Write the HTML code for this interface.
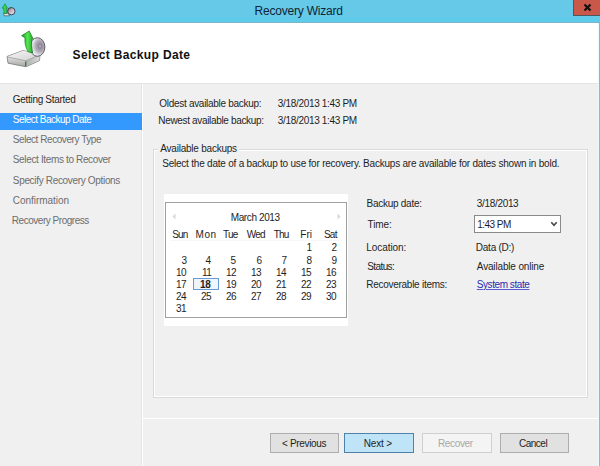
<!DOCTYPE html>
<html><head><meta charset="utf-8"><style>
html,body{margin:0;padding:0;}
body{width:600px;height:466px;overflow:hidden;position:relative;background:#f0f0f0;font-family:"Liberation Sans",sans-serif;}
.r{position:absolute;}
.t{position:absolute;white-space:nowrap;line-height:1;}
</style></head><body>
<div class="r" style="left:0px;top:0px;width:600px;height:23px;background:#67c9e8;"></div>
<div class="r" style="left:0px;top:17px;width:600px;height:5px;background:#5ecbea;"></div>
<div class="r" style="left:0px;top:22px;width:600px;height:1px;background:#7ab6c8;"></div>
<div class="t" style="left:254.60px;top:5.14px;font-size:12px;letter-spacing:-0.214px;color:#0d2535;font-weight:normal;">Recovery Wizard</div>
<div class="r" style="left:573px;top:0px;width:27px;height:16px;background:#c9574a;border-left:1px solid #4c5a60;border-bottom:1px solid #4c5a60;box-sizing:border-box;"></div>
<svg class="r" style="left:583px;top:3px" width="9" height="9" viewBox="0 0 9 9"><path d="M1.5 1.5 L7.5 7.5 M7.5 1.5 L1.5 7.5" stroke="#111" stroke-width="2.2" stroke-linecap="butt"/></svg>
<svg class="r" style="left:0px;top:0px" width="20" height="20" viewBox="0 0 20 20">
<defs><linearGradient id="sd" x1="0" y1="0" x2="1" y2="1"><stop offset="0" stop-color="#6e5060"/><stop offset="0.45" stop-color="#c8b0bc"/><stop offset="1" stop-color="#f4f4f4"/></linearGradient></defs>
<path d="M3.6 13.2 L8.5 13.2 L9.5 15.8 L4 15.8 Z" fill="#ecece4" stroke="#3a5a70" stroke-width="0.7"/>
<circle cx="11.3" cy="11.2" r="3.7" fill="url(#sd)" stroke="#2a3a4c" stroke-width="0.9"/>
<path d="M2.2 8.2 L5 3.8 L7.4 8.2 L6.4 8.2 L6.6 13.6 L4.2 13.6 L3.6 8.2 Z" fill="#3ad24a" stroke="#15802a" stroke-width="0.6" stroke-linejoin="round"/>
</svg>
<div class="r" style="left:598px;top:23px;width:1px;height:443px;background:#e6f9fc;"></div>
<div class="r" style="left:599px;top:23px;width:1px;height:443px;background:#85bccb;"></div>
<div class="r" style="left:0px;top:23px;width:598px;height:60px;background:#ffffff;"></div>
<div class="t" style="left:72.60px;top:49.44px;font-size:12px;letter-spacing:0.353px;color:#111;font-weight:bold;">Select Backup Date</div>
<svg class="r" style="left:0px;top:24px" width="56" height="52" viewBox="0 24 56 52">
<defs>
<linearGradient id="dtop" x1="0" y1="0" x2="1" y2="1"><stop offset="0" stop-color="#f4f4f4"/><stop offset="1" stop-color="#d2d2d2"/></linearGradient>
<linearGradient id="dfr" x1="0" y1="0" x2="0" y2="1"><stop offset="0" stop-color="#ececec"/><stop offset="0.5" stop-color="#d6d6d6"/><stop offset="1" stop-color="#a4a4a4"/></linearGradient>
<linearGradient id="drt" x1="0" y1="0" x2="1" y2="0"><stop offset="0" stop-color="#b0b0b0"/><stop offset="1" stop-color="#d8d8d8"/></linearGradient>
<radialGradient id="cd" cx="0.68" cy="0.45" r="0.8"><stop offset="0" stop-color="#c8c4cc"/><stop offset="0.12" stop-color="#8e8698"/><stop offset="0.4" stop-color="#b6b0bc"/><stop offset="0.65" stop-color="#e8e6ec"/><stop offset="1" stop-color="#fcfcfc"/></radialGradient>
<linearGradient id="ar" x1="0" y1="0" x2="1" y2="0"><stop offset="0" stop-color="#189a20"/><stop offset="0.5" stop-color="#55e652"/><stop offset="1" stop-color="#22a82a"/></linearGradient>
</defs>
<path d="M7 56.5 L23 50.5 L40 54.5 L39.5 60.5 L26 66.8 L8 63.2 Z" fill="url(#dfr)" stroke="#7a7a7a" stroke-width="0.8" stroke-linejoin="round"/>
<path d="M7.5 56.8 L23 50.8 L39.6 54.7 L26 60.8 Z" fill="url(#dtop)"/>
<path d="M26 60.8 L39.6 54.7 L39.2 60.3 L26 66.5 Z" fill="url(#drt)"/>
<path d="M7.5 57 L26 60.8 L39.6 54.7" fill="none" stroke="#8e8e8e" stroke-width="0.6"/>
<rect x="25" y="61.5" width="1.3" height="4.5" fill="#1e8a24"/>
<ellipse cx="37.4" cy="47" rx="7.5" ry="9.3" fill="url(#cd)" stroke="#505058" stroke-width="0.9"/>
<path d="M32 40 C31 44 31 50 33 54" fill="none" stroke="#8ab0d0" stroke-width="1"/>
<path d="M28.2 51.8 C25.3 47 24.6 42 25 37.8 L21.6 35.7 L29.2 31 L33.3 39.2 L31.8 38.8 C31.3 43 31.6 48 32.6 52.8 Z" fill="url(#ar)" stroke="#137a1a" stroke-width="0.7" stroke-linejoin="round"/>
</svg>
<div class="r" style="left:0px;top:83px;width:598px;height:1px;background:#e4e4e4;"></div>
<div class="r" style="left:141px;top:84px;width:1px;height:382px;background:#e6e6e6;"></div>
<div class="r" style="left:142px;top:84px;width:1px;height:382px;background:#ffffff;"></div>
<div class="r" style="left:0px;top:113px;width:142px;height:17px;background:#3399ff;"></div>
<div class="t" style="left:12.80px;top:94.53px;font-size:10.0px;letter-spacing:-0.307px;color:#1e1e1e;font-weight:normal;">Getting Started</div>
<div class="t" style="left:12.80px;top:114.83px;font-size:10.0px;letter-spacing:-0.518px;color:#ffffff;font-weight:normal;">Select Backup Date</div>
<div class="t" style="left:12.80px;top:135.13px;font-size:10.0px;letter-spacing:-0.442px;color:#6d6d6d;font-weight:normal;">Select Recovery Type</div>
<div class="t" style="left:12.80px;top:155.44px;font-size:10.0px;letter-spacing:-0.355px;color:#6d6d6d;font-weight:normal;">Select Items to Recover</div>
<div class="t" style="left:12.80px;top:175.73px;font-size:10.0px;letter-spacing:-0.326px;color:#6d6d6d;font-weight:normal;">Specify Recovery Options</div>
<div class="t" style="left:12.80px;top:196.03px;font-size:10.0px;letter-spacing:-0.045px;color:#6d6d6d;font-weight:normal;">Confirmation</div>
<div class="t" style="left:11.80px;top:216.34px;font-size:10.0px;letter-spacing:-0.469px;color:#6d6d6d;font-weight:normal;">Recovery Progress</div>
<div class="t" style="left:159.30px;top:98.63px;font-size:10.0px;letter-spacing:-0.296px;color:#1e1e1e;font-weight:normal;">Oldest available backup:</div>
<div class="t" style="left:158.30px;top:116.13px;font-size:10.0px;letter-spacing:-0.335px;color:#1e1e1e;font-weight:normal;">Newest available backup:</div>
<div class="t" style="left:277.80px;top:98.63px;font-size:10.0px;letter-spacing:-0.319px;color:#1e1e1e;font-weight:normal;">3/18/2013 1:43 PM</div>
<div class="t" style="left:277.80px;top:116.13px;font-size:10.0px;letter-spacing:-0.319px;color:#1e1e1e;font-weight:normal;">3/18/2013 1:43 PM</div>
<div class="r" style="left:153px;top:149px;width:435px;height:249px;border:1px solid #dadada;box-shadow:1px 1px 0 #ffffff inset, -1px -1px 0 #ffffff inset;box-sizing:border-box;"></div>
<div class="r" style="left:158px;top:141px;width:81px;height:14px;background:#f0f0f0;"></div>
<div class="t" style="left:160.30px;top:144.03px;font-size:10.0px;letter-spacing:-0.225px;color:#1e1e1e;font-weight:normal;">Available backups</div>
<div class="t" style="left:162.20px;top:159.34px;font-size:10.0px;letter-spacing:-0.218px;color:#1e1e1e;font-weight:normal;">Select the date of a backup to use for recovery. Backups are available for dates shown in bold.</div>
<div class="r" style="left:164px;top:194px;width:184px;height:132px;background:#ffffff;"></div>
<div class="r" style="left:165px;top:202px;width:182px;height:116px;border:1px solid #a0a0a0;box-sizing:border-box;"></div>
<div class="r" style="left:170px;top:240px;width:172px;height:1px;background:#f7f7f7;"></div>
<div class="t" style="left:230.70px;top:212.84px;font-size:10.0px;letter-spacing:-0.378px;color:#1e1e1e;font-weight:normal;">March 2013</div>
<svg class="r" style="left:171px;top:213px" width="6" height="7"><path d="M4.5 0.5 L1.5 3.5 L4.5 6.5 Z" fill="#d8d8d8"/></svg>
<svg class="r" style="left:336px;top:213px" width="6" height="7"><path d="M1.5 0.5 L4.5 3.5 L1.5 6.5 Z" fill="#d8d8d8"/></svg>
<div class="t" style="left:172.15px;top:230.03px;font-size:10.0px;letter-spacing:-0.750px;color:#1e1e1e;font-weight:normal;">Sun</div>
<div class="t" style="left:195.55px;top:230.03px;font-size:10.0px;letter-spacing:0.500px;color:#1e1e1e;font-weight:normal;">Mon</div>
<div class="t" style="left:223.05px;top:230.03px;font-size:10.0px;letter-spacing:-0.750px;color:#1e1e1e;font-weight:normal;">Tue</div>
<div class="t" style="left:246.70px;top:230.03px;font-size:10.0px;letter-spacing:-0.700px;color:#1e1e1e;font-weight:normal;">Wed</div>
<div class="t" style="left:273.70px;top:230.03px;font-size:10.0px;letter-spacing:-0.750px;color:#1e1e1e;font-weight:normal;">Thu</div>
<div class="t" style="left:300.30px;top:230.03px;font-size:10.0px;letter-spacing:0.000px;color:#1e1e1e;font-weight:normal;">Fri</div>
<div class="t" style="left:323.95px;top:230.03px;font-size:10.0px;letter-spacing:-0.750px;color:#1e1e1e;font-weight:normal;">Sat</div>
<div class="r" style="left:193px;top:278px;width:26px;height:12px;background:#eef5fc;border:1px solid #6a9ad6;box-sizing:border-box;"></div>
<div class="t" style="left:306.50px;top:243.23px;font-size:10.0px;letter-spacing:-0.400px;color:#1e1e1e;font-weight:normal;">1</div>
<div class="t" style="left:331.50px;top:243.23px;font-size:10.0px;letter-spacing:-0.400px;color:#1e1e1e;font-weight:normal;">2</div>
<div class="t" style="left:181.50px;top:255.53px;font-size:10.0px;letter-spacing:-0.400px;color:#1e1e1e;font-weight:normal;">3</div>
<div class="t" style="left:205.50px;top:255.53px;font-size:10.0px;letter-spacing:-0.400px;color:#1e1e1e;font-weight:normal;">4</div>
<div class="t" style="left:230.50px;top:255.53px;font-size:10.0px;letter-spacing:-0.400px;color:#1e1e1e;font-weight:normal;">5</div>
<div class="t" style="left:256.50px;top:255.53px;font-size:10.0px;letter-spacing:-0.400px;color:#1e1e1e;font-weight:normal;">6</div>
<div class="t" style="left:281.50px;top:255.53px;font-size:10.0px;letter-spacing:-0.400px;color:#1e1e1e;font-weight:normal;">7</div>
<div class="t" style="left:306.50px;top:255.53px;font-size:10.0px;letter-spacing:-0.400px;color:#1e1e1e;font-weight:normal;">8</div>
<div class="t" style="left:331.50px;top:255.53px;font-size:10.0px;letter-spacing:-0.400px;color:#1e1e1e;font-weight:normal;">9</div>
<div class="t" style="left:175.90px;top:267.84px;font-size:10.0px;letter-spacing:-0.400px;color:#1e1e1e;font-weight:normal;">10</div>
<div class="t" style="left:201.90px;top:267.84px;font-size:10.0px;letter-spacing:-0.400px;color:#1e1e1e;font-weight:normal;">11</div>
<div class="t" style="left:225.90px;top:267.84px;font-size:10.0px;letter-spacing:-0.400px;color:#1e1e1e;font-weight:normal;">12</div>
<div class="t" style="left:250.90px;top:267.84px;font-size:10.0px;letter-spacing:-0.400px;color:#1e1e1e;font-weight:normal;">13</div>
<div class="t" style="left:275.90px;top:267.84px;font-size:10.0px;letter-spacing:-0.400px;color:#1e1e1e;font-weight:normal;">14</div>
<div class="t" style="left:300.90px;top:267.84px;font-size:10.0px;letter-spacing:-0.400px;color:#1e1e1e;font-weight:normal;">15</div>
<div class="t" style="left:325.90px;top:267.84px;font-size:10.0px;letter-spacing:-0.400px;color:#1e1e1e;font-weight:normal;">16</div>
<div class="t" style="left:175.90px;top:279.84px;font-size:10.0px;letter-spacing:-0.400px;color:#1e1e1e;font-weight:normal;">17</div>
<div class="t" style="left:200.00px;top:279.84px;font-size:10.0px;letter-spacing:-0.200px;color:#1e1e1e;font-weight:bold;">18</div>
<div class="t" style="left:225.90px;top:279.84px;font-size:10.0px;letter-spacing:-0.400px;color:#1e1e1e;font-weight:normal;">19</div>
<div class="t" style="left:250.90px;top:279.84px;font-size:10.0px;letter-spacing:-0.400px;color:#1e1e1e;font-weight:normal;">20</div>
<div class="t" style="left:275.90px;top:279.84px;font-size:10.0px;letter-spacing:-0.400px;color:#1e1e1e;font-weight:normal;">21</div>
<div class="t" style="left:300.90px;top:279.84px;font-size:10.0px;letter-spacing:-0.400px;color:#1e1e1e;font-weight:normal;">22</div>
<div class="t" style="left:325.90px;top:279.84px;font-size:10.0px;letter-spacing:-0.400px;color:#1e1e1e;font-weight:normal;">23</div>
<div class="t" style="left:175.90px;top:292.04px;font-size:10.0px;letter-spacing:-0.400px;color:#1e1e1e;font-weight:normal;">24</div>
<div class="t" style="left:200.90px;top:292.04px;font-size:10.0px;letter-spacing:-0.400px;color:#1e1e1e;font-weight:normal;">25</div>
<div class="t" style="left:225.90px;top:292.04px;font-size:10.0px;letter-spacing:-0.400px;color:#1e1e1e;font-weight:normal;">26</div>
<div class="t" style="left:250.90px;top:292.04px;font-size:10.0px;letter-spacing:-0.400px;color:#1e1e1e;font-weight:normal;">27</div>
<div class="t" style="left:275.90px;top:292.04px;font-size:10.0px;letter-spacing:-0.400px;color:#1e1e1e;font-weight:normal;">28</div>
<div class="t" style="left:300.90px;top:292.04px;font-size:10.0px;letter-spacing:-0.400px;color:#1e1e1e;font-weight:normal;">29</div>
<div class="t" style="left:325.90px;top:292.04px;font-size:10.0px;letter-spacing:-0.400px;color:#1e1e1e;font-weight:normal;">30</div>
<div class="t" style="left:175.90px;top:303.94px;font-size:10.0px;letter-spacing:-0.400px;color:#1e1e1e;font-weight:normal;">31</div>
<div class="t" style="left:366.50px;top:198.84px;font-size:10.0px;letter-spacing:-0.264px;color:#1e1e1e;font-weight:normal;">Backup date:</div>
<div class="t" style="left:367.50px;top:219.84px;font-size:10.0px;letter-spacing:-0.100px;color:#1e1e1e;font-weight:normal;">Time:</div>
<div class="t" style="left:366.20px;top:243.44px;font-size:10.0px;letter-spacing:-0.050px;color:#1e1e1e;font-weight:normal;">Location:</div>
<div class="t" style="left:367.20px;top:261.64px;font-size:10.0px;letter-spacing:-0.583px;color:#1e1e1e;font-weight:normal;">Status:</div>
<div class="t" style="left:366.20px;top:279.64px;font-size:10.0px;letter-spacing:-0.265px;color:#1e1e1e;font-weight:normal;">Recoverable items:</div>
<div class="t" style="left:476.80px;top:198.84px;font-size:10.0px;letter-spacing:-0.325px;color:#1e1e1e;font-weight:normal;">3/18/2013</div>
<div class="r" style="left:474px;top:215px;width:87px;height:18px;background:#ffffff;border:1px solid #8a8a8a;box-sizing:border-box;"></div>
<div class="t" style="left:477.30px;top:219.63px;font-size:10.0px;letter-spacing:-0.533px;color:#1e1e1e;font-weight:normal;">1:43 PM</div>
<svg class="r" style="left:550px;top:221px" width="8" height="7"><path d="M1.3 1.3 L4 4.3 L6.7 1.3" fill="none" stroke="#4a4a4a" stroke-width="1.7"/></svg>
<div class="t" style="left:475.80px;top:243.44px;font-size:10.0px;letter-spacing:-0.238px;color:#1e1e1e;font-weight:normal;">Data (D:)</div>
<div class="t" style="left:476.80px;top:261.64px;font-size:10.0px;letter-spacing:-0.160px;color:#1e1e1e;font-weight:normal;">Available online</div>
<div class="t" style="left:476.80px;top:279.64px;font-size:10.0px;letter-spacing:-0.436px;color:#2a2ab0;font-weight:normal;text-decoration:underline;text-decoration-color:#5a5ad0;">System state</div>
<div class="r" style="left:143px;top:418px;width:455px;height:1px;background:#ffffff;"></div>
<div class="r" style="left:270px;top:433px;width:69px;height:20px;background:#e1e1e1;border:1px solid #adadad;box-sizing:border-box;"></div>
<div class="r" style="left:344px;top:433px;width:70px;height:20px;background:#bfe4f8;border:1px solid #4f82a8;box-sizing:border-box;"></div>
<div class="r" style="left:422px;top:433px;width:70px;height:20px;background:#f4f4f4;border:1px solid #cfcfcf;box-sizing:border-box;"></div>
<div class="r" style="left:500px;top:433px;width:69px;height:20px;background:#e1e1e1;border:1px solid #adadad;box-sizing:border-box;"></div>
<div class="t" style="left:282.00px;top:438.64px;font-size:10.0px;letter-spacing:-0.333px;color:#1e1e1e;font-weight:normal;">&lt; Previous</div>
<div class="t" style="left:363.70px;top:438.64px;font-size:10.0px;letter-spacing:-0.140px;color:#1e1e1e;font-weight:normal;">Next &gt;</div>
<div class="t" style="left:438.00px;top:438.64px;font-size:10.0px;letter-spacing:-0.350px;color:#a8a8a8;font-weight:normal;">Recover</div>
<div class="t" style="left:519.00px;top:438.64px;font-size:10.0px;letter-spacing:-0.500px;color:#1e1e1e;font-weight:normal;">Cancel</div>
</body></html>
